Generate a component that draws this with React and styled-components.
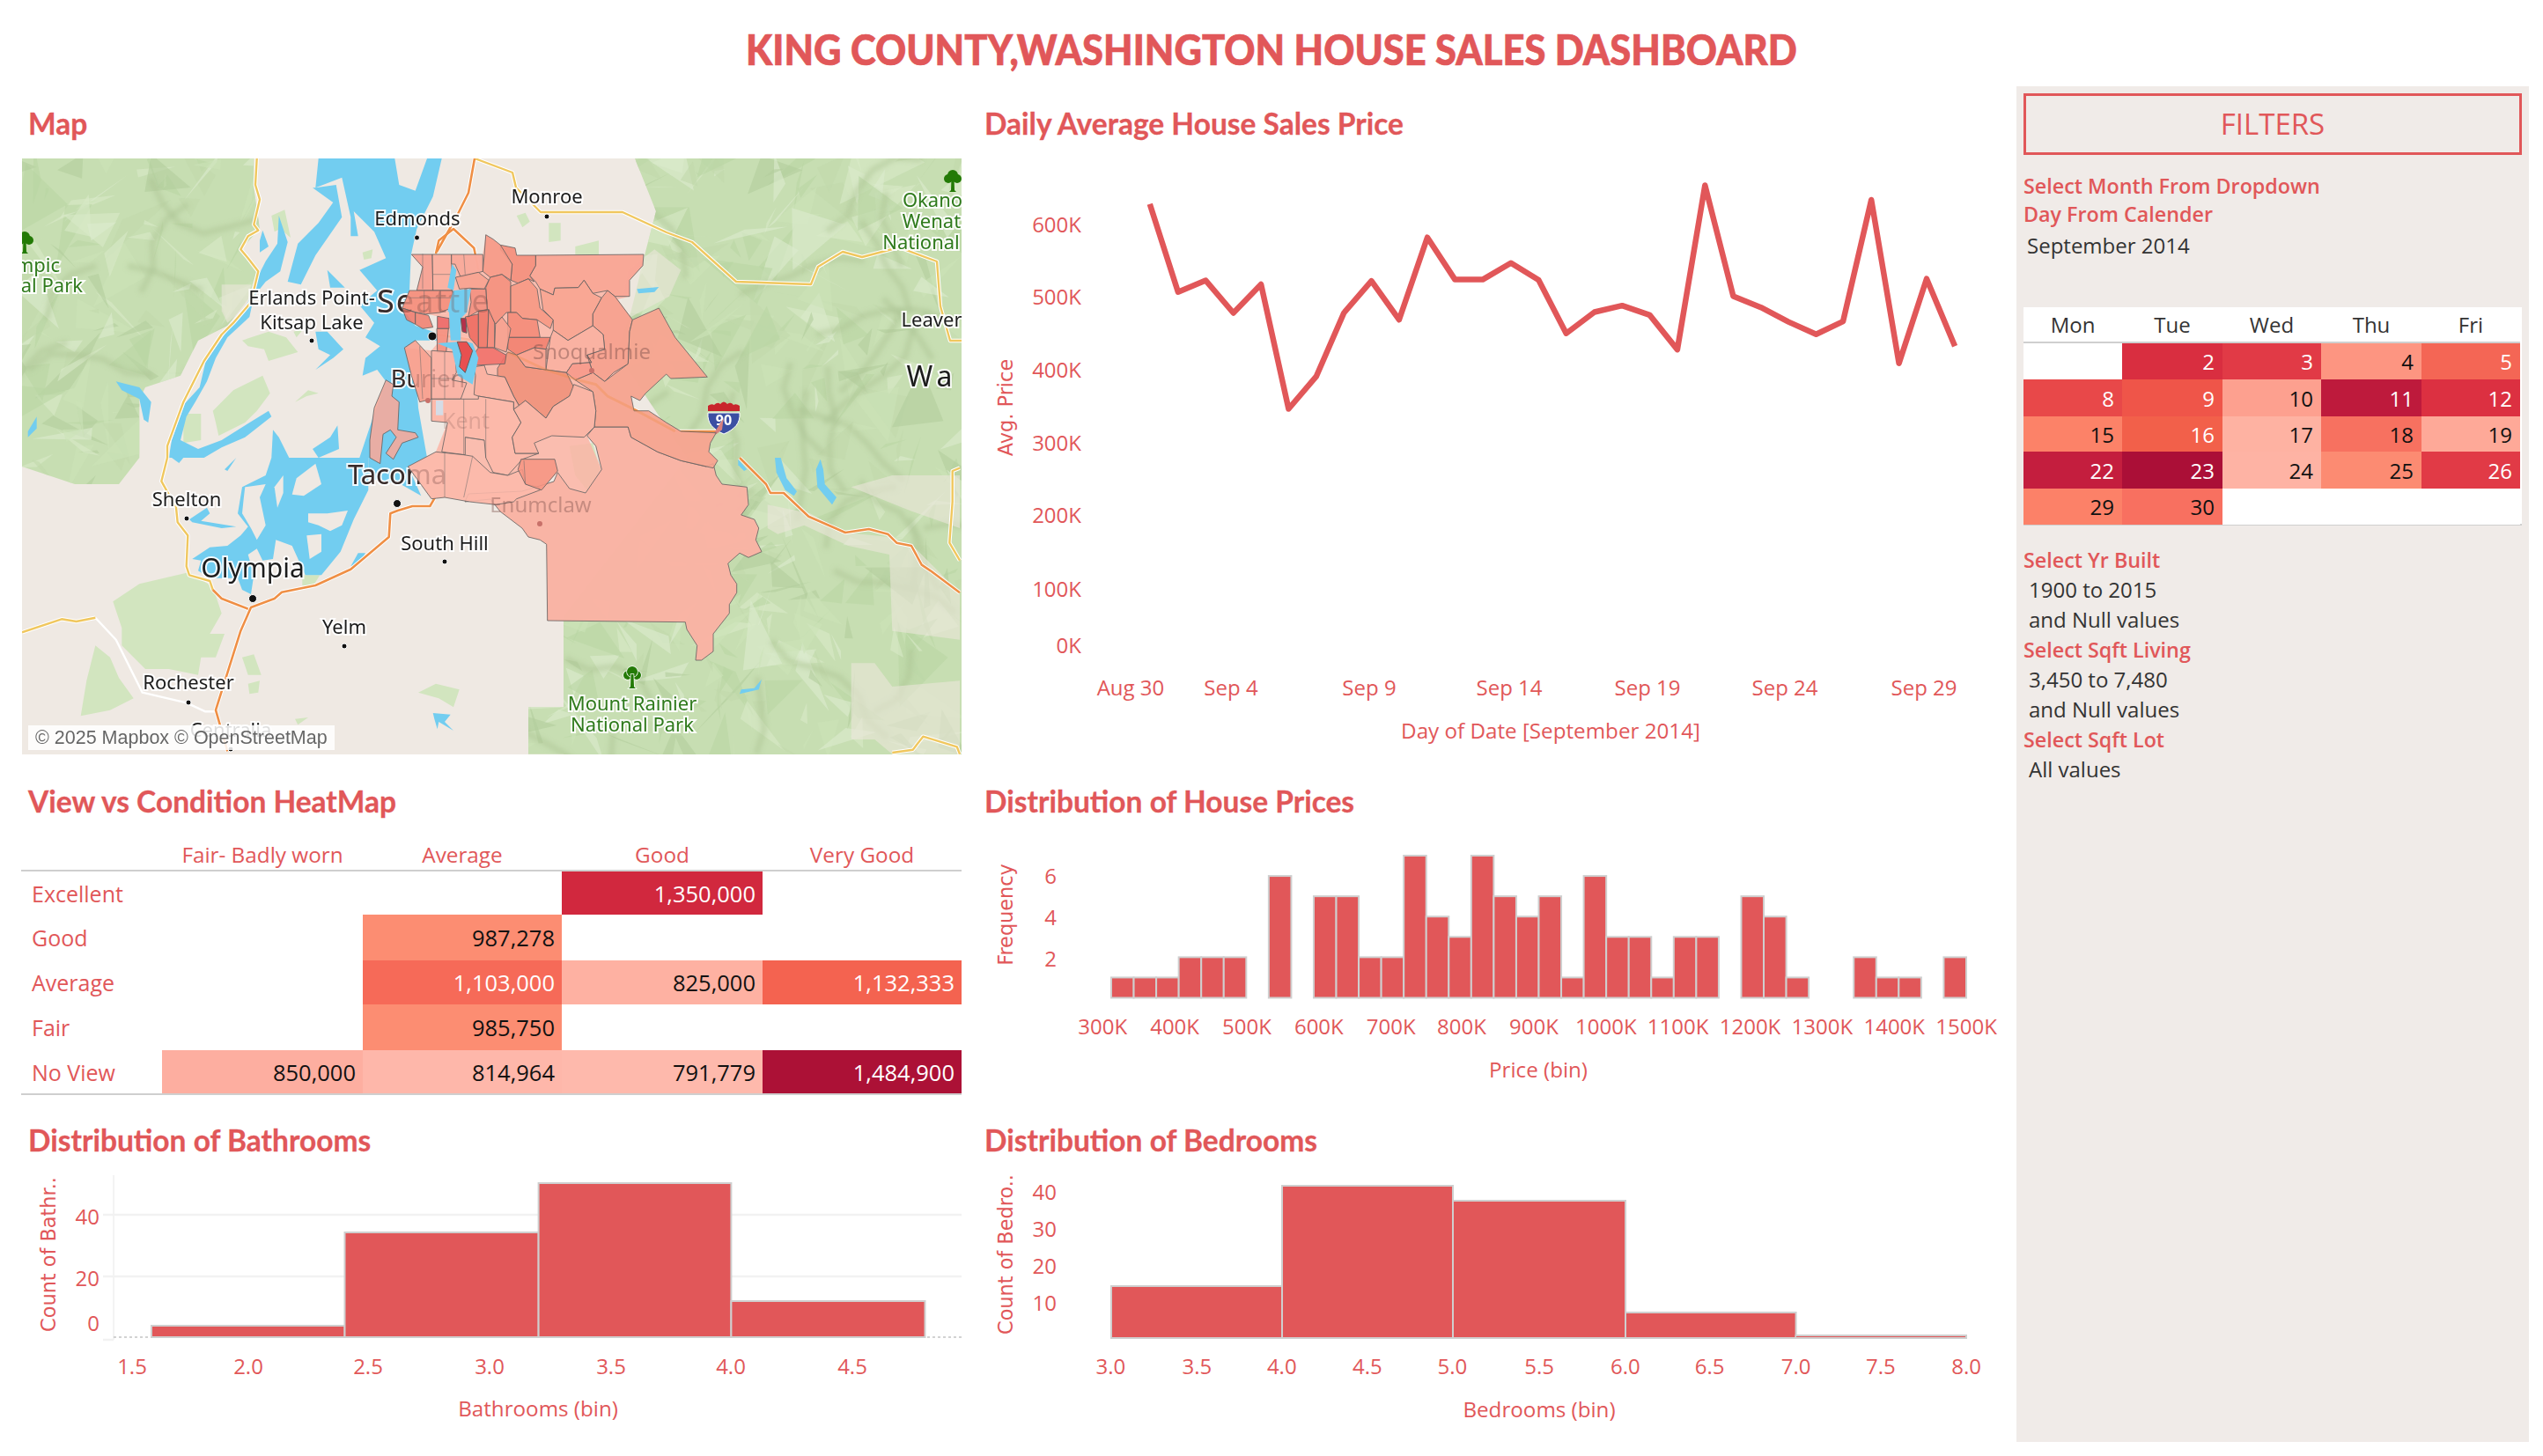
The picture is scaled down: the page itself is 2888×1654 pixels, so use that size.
import React from "react";
import styled, { createGlobalStyle } from "styled-components";

const RED = "#e15759";

const GlobalStyle = createGlobalStyle`
  html, body { margin: 0; padding: 0; background: #fff; }
  body { font-family: "Open Sans", sans-serif; }
`;

const Page = styled.div`
  width: 2888px;
  height: 1654px;
  overflow: hidden;
  background: #fff;
`;
const Title = styled.h1`
  margin: 0;
  height: 98px;
  padding-top: 30px;
  box-sizing: border-box;
  text-align: center;
  font: 900 47px/52px Lato, sans-serif;
  color: ${RED};
  -webkit-text-stroke: 0.7px ${RED};
  transform: scaleX(0.925);
`;
const Body = styled.div`
  display: flex;
`;
const Dash = styled.div`
  width: 2290px;
  display: grid;
  grid-template-columns: 1092px 1198px;
  grid-template-rows: 782px 385px 373px;
`;
const Section = styled.section`
  padding-top: ${(p) => (p.$first ? 12 : 0)}px;
  box-sizing: border-box;
  min-width: 0;
`;
const SectionTitle = styled.h2`
  margin: 0;
  height: 60px;
  padding-left: ${(p) => p.$pad || 32}px;
  font: 700 33.5px/60px Lato, sans-serif;
  color: ${RED};
  -webkit-text-stroke: 0.3px ${RED};
`;
const MapFrame = styled.div`
  position: relative;
  width: 1067px;
  height: 677px;
  margin: 10px 0 0 25px;
  overflow: hidden;
  box-shadow: inset 0 0 0 1px #ddd;
`;
const MapSvg = styled.svg`
  display: block;
`;
const Attribution = styled.div`
  position: absolute;
  left: 7px;
  bottom: 5px;
  padding: 0 8px;
  height: 28px;
  background: rgba(255, 255, 255, 0.85);
  color: #666;
  font: 21.5px/28px "Liberation Sans", sans-serif;
  white-space: nowrap;
`;
const MapLabel = styled.text`
  font-family: "Noto Sans", sans-serif;
  font-size: ${(p) => p.$size || 22}px;
  letter-spacing: ${(p) => p.$track || 0}px;
  fill: ${(p) => p.$color || "#1c1c1c"};
  stroke: rgba(255, 255, 255, 0.9);
  stroke-width: 4px;
  paint-order: stroke;
  text-anchor: ${(p) => p.$anchor || "middle"};
  dominant-baseline: central;
`;
const GhostLabel = styled.text`
  font-family: "Noto Sans", sans-serif;
  font-size: ${(p) => p.$size || 22}px;
  letter-spacing: ${(p) => p.$track || 0}px;
  fill: #7a4f4a;
  opacity: ${(p) => p.$fade || 0.4};
  text-anchor: middle;
  dominant-baseline: central;
`;
const ChartSvg = styled.svg`
  display: block;
`;
const Tick = styled.text`
  font: 400 24px "Open Sans", sans-serif;
  fill: ${RED};
  text-anchor: ${(p) => p.$anchor || "middle"};
  dominant-baseline: central;
`;
const AxisTitle = styled.text`
  font: 500 24.2px "Open Sans", sans-serif;
  fill: ${RED};
  text-anchor: middle;
  dominant-baseline: central;
`;
const SideTitle = styled.text`
  font: 400 22.4px "DejaVu Sans", sans-serif;
  fill: ${RED};
  text-anchor: middle;
  dominant-baseline: central;
`;
const Bar = styled.rect`
  fill: ${RED};
  stroke: #cfcfcf;
  stroke-width: 2px;
`;
const Heat = styled.div`
  margin-left: 24px;
  width: 1068px;
  display: grid;
  grid-template-columns: 160px 228px 226px 228px 226px;
  grid-template-rows: 50px 49px 52px 50px 52px 49px;
  border-bottom: 2px solid #cfcfcf;
  font-size: 25.5px;
`;
const HeatHead = styled.div`
  padding-top: 17px;
  height: 50px;
  box-sizing: border-box;
  text-align: center;
  font-size: 24.3px;
  line-height: 28px;
  font-weight: 500;
  color: ${RED};
  border-bottom: 2px solid #cfcfcf;
`;
const HeatLabel = styled.div`
  display: flex;
  align-items: center;
  padding-left: 12px;
  font-size: 25px;
  font-weight: 500;
  color: ${RED};
`;
const HeatCell = styled.div`
  display: flex;
  align-items: center;
  justify-content: flex-end;
  padding-right: 8px;
  background: ${(p) => p.$bg || "transparent"};
  color: ${(p) => (p.$light ? "#fff" : "#111")};
`;
const Sidebar = styled.aside`
  width: 582px;
  height: 1540px;
  box-sizing: border-box;
  padding: 8px 8px 0;
  background: #f0ebe8;
`;
const FilterBox = styled.div`
  height: 70px;
  box-sizing: border-box;
  border: 3px solid ${RED};
  text-align: center;
  font: 500 33px/64px "Open Sans", sans-serif;
  color: ${RED};
`;
const FilterLabel = styled.div`
  font-weight: 600;
  font-size: 23.3px;
  line-height: ${(p) => p.$line || 34}px;
  color: ${RED};
`;
const FilterValue = styled.div`
  padding-left: ${(p) => p.$pad || 6}px;
  padding-top: ${(p) => p.$top || 0}px;
  font-size: 24px;
  line-height: 34px;
  color: #333;
`;
const FilterTop = styled.div`
  padding-top: 19px;
`;
const Calendar = styled.div`
  margin-top: 53px;
  height: 248px;
  box-sizing: border-box;
  background: #fff;
  display: grid;
  grid-template-columns: 112px 114px 112px 114px 112px;
  grid-template-rows: 41px 41px 42px 40px 42px 41px;
  border-bottom: 2px solid #cfcfcf;
  font-size: 24px;
`;
const CalHead = styled.div`
  text-align: center;
  line-height: 40px;
  font-weight: 500;
  color: #333;
  border-bottom: 2px solid #cfcfcf;
`;
const CalCell = styled.div`
  display: flex;
  align-items: center;
  justify-content: flex-end;
  padding-right: 9px;
  background: ${(p) => p.$bg || "#fff"};
  color: ${(p) => (p.$light ? "#fff" : "#111")};
`;
const FilterBottom = styled.div`
  padding-top: 22px;
`;

// map geometry is traced from crops of the picture, each with its own origin and 3x scale
const ORIGIN = { A: [25, 180], B: [25, 520], C: [380, 240], D: [600, 520] };
const trace = (o, s) =>
  s.trim().split(/\s+/).map((p) => {
    const [x, y] = p.split(",").map(Number);
    return `${(ORIGIN[o][0] + x / 3).toFixed(1)},${(ORIGIN[o][1] + y / 3).toFixed(1)}`;
  }).join(" ");

const GREEN_AREAS = [
  trace("A", "0,0 790,0 790,100 810,240 745,310 800,385 770,480 700,570 600,620 540,740 420,780 400,820 400,1020 0,1020"),
  trace("B", "0,0 400,0 330,90 180,90 0,30"),
  "721,180 1092,180 1092,857 640,857 640,700 780,520 700,400 715,360 720,340 732,290 745,240",
  trace("D", "0,850 120,850 120,1010 0,1010"),
];
const PALE_GREEN = [
  trace("A", "650,860 720,790 820,740 845,800 800,860 760,900 670,945 660,900"),
  trace("A", "550,870 610,870 610,960 550,970"),
  trace("A", "750,620 840,590 900,610 940,660 840,690 825,650 770,640"),
  trace("A", "850,195 895,175 915,270 880,240 860,250"),
  trace("A", "1160,320 1195,310 1190,340 1165,345"),
  trace("A", "925,590 960,580 935,610"),
  trace("A", "930,830 975,790 1010,800 970,810"),
  trace("B", "310,490 400,430 570,390 650,440 680,530 640,600 690,600 660,680 610,680 600,740 500,720 420,720 340,640 340,580"),
  trace("B", "250,640 300,680 330,750 380,820 300,860 200,880 220,760"),
  trace("B", "750,680 790,670 815,740 770,740"),
  trace("B", "770,770 810,760 805,800 775,805"),
  trace("B", "1350,800 1410,770 1490,790 1470,850 1420,820"),
  trace("B", "930,890 975,885 940,910"),
  trace("B", "955,400 1015,400 990,440 955,435"),
  trace("C", "620,15 650,5 665,35 640,55"),
  trace("C", "730,40 770,40 770,100 730,105"),
  trace("C", "820,120 900,100 900,150 820,150"),
  trace("C", "800,800 880,790 905,880 860,950 820,900"),
];
const TAN_AREAS = [
  trace("D", "815,160 960,190 1080,255 1230,270 1310,300 1470,460 1470,620 1240,590 1230,330 1090,300 940,230 850,260 815,240"),
  trace("D", "1100,700 1180,700 1240,780 1470,760 1470,1010 1240,1010 1180,960 1100,960"),
  trace("D", "1240,60 1470,60 1470,240 1300,180 1100,100"),
  trace("A", "680,430 780,430 770,500 700,560 680,520"),
  trace("C", "1000,200 1090,130 1180,200 1140,290 1010,360 975,320"),
];
const WATER = [
  trace("A", "1010,0 1270,0 1285,90 1340,110 1380,0 1430,0 1400,130 1345,240 1325,330 1320,450 1295,510 1340,570 1400,590 1420,620 1340,620 1305,650 1320,700 1345,770 1350,850 1380,1020 1150,1020 1200,870 1240,760 1210,720 1160,740 1170,680 1220,640 1170,610 1200,560 1150,500 1210,450 1150,380 1240,340 1200,250 1130,180 1145,265 1120,265 1120,200 1090,65 1000,100"),
  trace("A", "1000,100 1070,90 1090,200 1000,330 950,430 905,420 940,290 1010,220 1060,150 990,100"),
  trace("A", "875,195 905,285 880,385 830,420 790,470 775,540 700,610 660,680 630,760 590,830 560,880 540,960 600,990 680,960 760,910 840,860 850,880 760,950 680,985 620,1020 500,1020 510,960 555,835 605,780 625,695 690,600 730,550 770,490 810,390 830,350 870,290"),
  trace("A", "820,245 840,300 810,320 810,280"),
  trace("A", "1000,720 1060,680 1095,650 1040,590 1000,590 1010,650 1050,670"),
  trace("A", "1040,380 1100,440 1050,440"),
  trace("A", "855,925 875,950 910,1020 850,1020"),
  trace("A", "1075,910 1080,990 1010,1020 990,990 1050,950"),
  trace("B", "690,40 730,0 700,45"),
  trace("B", "510,0 550,0 535,18"),
  trace("B", "850,0 1180,0 1180,110 1130,210 1085,320 1020,400 965,400 920,300 865,280 855,345 820,350 800,310 770,330 790,400 780,465 750,450 735,410 690,410 640,410 600,385 610,350 580,345 640,305 700,300 745,265 770,235 735,190 740,160 750,100 830,60"),
  trace("B", "570,210 630,170 640,190 610,215 730,235 680,240 580,220"),
  trace("B", "1120,370 1145,325 1170,325 1150,360"),
  trace("B", "1180,0 1390,0 1320,40 1360,130 1290,90 1180,70"),
  trace("B", "1400,870 1460,875 1440,900 1470,930 1420,900 1415,925 1405,890"),
  trace("C", "1030,265 1105,258 1090,275 1035,280"),
  trace("D", "840,0 860,0 880,70 915,115 905,130 875,110 845,50"),
  trace("D", "995,5 1005,40 1010,90 1050,135 1035,160 985,100 980,40"),
  trace("D", "795,755 785,790 720,805 725,790 770,785"),
  trace("D", "715,5 745,40 735,45 715,25"),
  trace("A", "320,760 400,780 440,830 430,900 415,890 400,820 340,790"),
  trace("A", "50,880 50,920 20,950 20,930"),
];
const ISLANDS = [
  trace("B", "760,100 830,90 810,135 830,230 800,280 780,240 750,190 755,140"),
  trace("B", "975,190 1040,190 1110,180 1090,230 1050,250 1010,230 975,220"),
  trace("B", "970,265 1020,260 1020,320 980,345"),
  trace("B", "935,70 1000,20 1020,90 960,130 920,125"),
  trace("B", "860,100 890,60 890,120 870,170"),
];
const LAKES = [
  trace("C", "385,260 400,180 415,200 405,270"),
  trace("C", "405,270 465,265 450,345 430,365 430,440 395,440 390,345 385,340 395,300"),
  trace("C", "350,450 420,445 432,490 425,530 445,550 470,475 450,445 470,450 490,500 470,590 420,560 400,470"),
];
const ORANGE_ROADS = [
  trace("B", "1410,130 1390,165 1330,165 1280,180 1255,190 1250,270 1120,380 1000,435 885,458 860,480 780,510 745,590 660,860 700,1000"),
  trace("B", "770,515 680,480 650,450"),
  trace("C", "590,480 720,540 830,575 890,590 930,630 1030,680 1160,750 1300,750"),
  trace("D", "720,0 810,90 825,120 870,120 955,200 1080,255 1160,243 1225,260 1255,290 1305,300 1340,365 1370,385 1470,460"),
  trace("C", "345,145 355,100 405,60 475,125 490,200"),
  "539,180 532,219 518,247 496,286",
  trace("C", "345,420 480,440"),
];
const YELLOW_ROADS = [
  trace("B", "650,450 640,420 570,400 560,370 565,265 530,220 525,170 475,80 495,0"),
  trace("A", "495,1020 495,980 550,830 620,690 680,600 720,560 780,490 805,385 770,340 745,310 770,265 805,245 790,225 810,140 795,90 800,0"),
  trace("B", "0,595 135,550 185,558 250,545"),
  trace("D", "1240,1005 1310,995 1345,950 1460,985 1470,1010"),
  trace("D", "1470,35 1445,45 1445,150 1435,290 1470,350"),
  "539,180 582,196 586,213 614,241 707,241 757,264 786,275 836,320 921,323 929,303 957,286 979,292 1021,281 1064,297 1068,348 1079,387 1092,387",
];
const WHITE_ROAD = trace("B", "250,545 320,620 410,800 560,835 625,865 660,865");

const SOUTHEAST = trace("C", "885,735 1000,735 1010,770 1100,820 1180,850 1265,870 1290,860") + " " + trace("D", "630,20 640,60 660,90 745,100 750,160 725,195 770,210 785,240 775,280 795,320 750,340 720,325 680,360 690,400 710,430 710,460 685,500 685,530 630,600 630,660 590,690 570,690 575,640 540,585 535,560 65,555 62,295 40,280 0,270") + " 593,600 568,581 557,567 528,570 532,561 593,558 629,547 " + trace("C", "760,890 800,945 855,960 910,880 890,800 860,765");
const COUNTY_OUTLINE = trace("C", "262,147 505,147 515,80 565,115 615,125 620,150 1053,147 1050,185 1005,235 1005,290 965,300 1015,370 1105,330 1160,430 1270,565 1145,570 1130,555 1060,620 1040,645 1010,630 1020,680 1070,680 1130,720 1180,750 1300,755 1280,790 1275,820 1305,850 1290,875 1180,850 1100,820 1010,770 1000,735 885,735 860,765 910,880 855,960 800,945 760,890 700,950 620,980 550,1000 375,975 330,980 250,870 345,820 385,720 330,715 330,640 290,650 262,560 238,465 330,475 350,450 350,358 230,330 255,270 280,270 300,190");

const ZIPS = [
  ["#f9b3a4", SOUTHEAST],
  ["#f9a594", trace("C", "685,150 1053,147 1050,185 1005,235 1005,290 955,290 930,270 880,280 850,235 830,260 750,262 745,285 700,265 685,240 665,220 685,185")],
  ["#f58e7c", trace("C", "565,115 615,125 620,150 685,150 685,185 665,220 680,240 660,230 625,245 600,235 605,180 565,130")],
  ["#f79a88", trace("C", "515,80 540,95 565,115 605,180 600,235 570,215 530,225 505,205 510,150")],
  ["#f58f7d", trace("C", "530,225 570,215 600,240 600,345 585,345 548,385 520,335 515,260")],
  ["#f79783", trace("C", "625,245 660,230 690,265 700,330 745,370 735,400 690,370 640,365 620,345 600,345 600,255")],
  ["#f9a491", trace("C", "700,265 745,285 750,262 830,260 850,235 880,280 910,295 880,350 880,390 795,440 745,405 745,370 710,335")],
  ["#f79f8d", trace("C", "910,295 930,270 955,290 1015,370 1005,410 1000,520 950,550 920,580 880,550 860,490 920,470 915,420 880,390 880,350")],
  ["#fbb0a0", trace("C", "880,390 915,420 920,470 860,490 875,515 810,520 790,550 720,540 735,430 745,405 795,440")],
  ["#f6a48f", trace("C", "1015,370 1105,330 1160,430 1270,565 1145,570 1130,555 1060,620 1040,645 1010,630 1020,680 1070,680 1130,720 1180,750 1300,755 1280,790 1275,820 1305,850 1290,875 1180,850 1100,820 1010,770 1000,735 885,735 890,680 880,615 820,575 880,550 920,580 1000,520 1005,410")],
  ["#f0917a", trace("C", "555,535 590,480 620,490 650,530 720,540 790,550 815,600 800,630 745,665 720,705 650,645 630,665 610,630 580,565 555,565")],
  ["#f58a78", trace("C", "590,345 620,345 640,365 690,370 700,430 590,430")],
  ["#f37f6e", trace("C", "590,430 735,430 720,470 680,465 620,490 590,470")],
  ["#f9a08e", trace("C", "620,490 680,465 720,470 720,540 650,530")],
  ["#f8998a", trace("C", "810,520 875,515 860,490 880,550 820,575 790,550")],
  ["#ef6a60", trace("C", "445,360 490,350 490,465 460,430")],
  ["#ef7668", trace("C", "490,340 525,335 520,465 490,465")],
  ["#f58a7a", trace("C", "525,335 545,380 545,465 520,465")],
  ["#f7a08f", trace("C", "548,385 570,360 600,400 585,480 545,465")],
  ["#f1706a", trace("C", "490,465 540,465 585,490 580,520 480,525 480,480")],
  ["#f7a294", trace("C", "262,147 333,147 335,270 280,270 300,190")],
  ["#fab0a0", trace("C", "333,147 398,147 400,270 335,270")],
  ["#f9a99a", trace("C", "398,147 505,147 505,205 430,225 410,180 398,180")],
  ["#f8a28f", trace("C", "412,225 490,208 525,235 510,265 460,262 425,265")],
  ["#f58e7c", trace("C", "255,270 400,270 420,320 360,345 310,350 280,345 230,330")],
  ["#f48f7f", trace("C", "460,265 515,265 520,335 490,340 455,360 465,310")],
  ["#ef7a6c", trace("C", "230,330 275,345 275,385 245,370")],
  ["#f08070", trace("C", "275,345 320,355 335,395 300,400 275,385")],
  ["#ee6868", trace("C", "350,358 390,365 390,400 350,400")],
  ["#f5907f", trace("C", "348,400 388,400 380,480 350,480")],
  ["#f8a090", trace("C", "238,465 275,440 330,500 330,640 290,650 262,560")],
  ["#fbb3a5", trace("C", "330,475 410,480 415,550 400,575 450,585 430,640 400,640 330,640")],
  ["#f8a898", trace("C", "175,575 200,590 195,630 220,650 215,745 275,755 285,770 230,790 200,845 175,825 210,770 190,745 165,760 155,860 120,840 120,780 135,670")],
  ["#fbb0a0", trace("C", "475,530 510,525 520,555 580,565 610,630 630,665 610,675 610,650 490,630 475,625 480,560")],
  ["#fdb8aa", trace("C", "430,640 490,640 490,630 610,650 610,675 635,720 605,770 615,825 695,825 640,845 590,900 540,890 515,840 510,780 445,770 445,830 365,820 385,720 330,715 330,640")],
  ["#fbb4a4", trace("C", "610,675 650,645 720,705 745,665 800,630 815,590 880,615 890,680 885,735 850,770 740,765 680,790 695,825 615,825 605,770 635,720")],
  ["#fdb9ab", trace("C", "345,820 440,830 470,835 530,890 590,900 640,880 650,930 695,940 700,950 620,980 610,990 550,1000 460,990 375,975 330,980 250,870")],
  ["#f79583", trace("C", "635,845 750,845 760,885 705,950 650,930 625,880")],
];
// these two islands sit in the lake, so they are painted after it
const LAKE_ZIPS = [
  ["#e85050", trace("C", "418,445 450,445 470,475 445,550 425,530 432,490")],
  ["#b5304a", trace("C", "430,365 447,365 450,415 435,410")],
];
const ZIP_LINES = [
  "300,145 300,265", "335,215 400,215", "440,147 445,215", "305,270 305,345", "360,270 360,345",
  "255,295 420,295", "375,480 375,640", "330,570 410,570", "290,460 300,640", "440,640 440,830",
  "445,770 510,780", "375,820 375,975", "470,835 440,975", "650,930 645,850", "515,640 515,840",
];
const CITY_DOTS = [
  [621, 246, 3], [473.5, 270, 3], [354, 387, 3], [491, 382, 5], [451, 572, 4.5], [212, 589, 3],
  [505, 638, 3], [287, 680, 4.5], [391, 734, 3], [214, 798, 3], [262, 851, 3],
];
const LABELS_UNDER = [
  ["Monroe", 621, 222], ["Edmonds", 474, 247], ["Erlands Point-", 354, 337], ["Kitsap Lake", 354, 365],
  ["Seattle", 493, 341, 36, 2], ["Burien", 486, 429, 27], ["Tacoma", 451, 538, 31],
  ["Shelton", 212, 566], ["Olympia", 287, 644, 30],
  ["South Hill", 505, 616], ["Yelm", 391, 711], ["Rochester", 214, 774], ["Centralia", 262, 828],
  ["Leaver", 1058, 362], ["Wa", 1058, 426, 32, 5],
];
const GHOST_LABELS = [
  ["Seattle", 493, 341, 36, 2, 0.3], ["Burien", 486, 429, 27, 0, 0.3], ["Kent", 529, 477, 25, 0, 0.22],
  ["Snoqualmie", 672, 398, 24, 0, 0.45], ["Tacoma", 451, 538, 31, 0, 0.3], ["Enumclaw", 614, 572, 24, 0, 0.4],
];
const PARK_LABELS = [
  ["Okano", 1059, 226], ["Wenat", 1058, 250], ["National", 1046, 274],
  ["Mount Rainier", 718, 798], ["National Park", 718, 822],
];

// small seeded generator, the mountain facets have to stay the same on every load
function makeRandom(seed) {
  let s = seed;
  return () => {
    s = (s * 16807) % 2147483647;
    return s / 2147483647;
  };
}

function buildFacets() {
  const r = makeRandom(4242);
  const shades = ["#d8eac8", "#b9d6a3", "#cbe2b7", "#c2d8ab", "#dcebcf", "#b2cd9c"];
  const out = [];
  for (let i = 0; i < 900; i++) {
    const x = 25 + r() * 1067;
    const y = 180 + r() * 677;
    const size = 18 + r() * 34;
    const p = [0, 1, 2].map(() => `${(x + (r() - 0.5) * size * 2).toFixed(1)},${(y + (r() - 0.5) * size * 2).toFixed(1)}`).join(" ");
    out.push({ p, fill: shades[Math.floor(r() * shades.length)] });
  }
  return out;
}

function buildRidges() {
  const r = makeRandom(991);
  const out = [];
  for (let i = 0; i < 60; i++) {
    let x = 25 + r() * 1067;
    let y = 180 + r() * 677;
    let a = r() * Math.PI * 2;
    const line = [`${x.toFixed(0)},${y.toFixed(0)}`];
    const steps = 3 + Math.floor(r() * 4);
    for (let k = 0; k < steps; k++) {
      a += (r() - 0.5) * 1.3;
      x += Math.cos(a) * 30;
      y += Math.sin(a) * 30;
      line.push(`${x.toFixed(0)},${y.toFixed(0)}`);
    }
    out.push(line.join(" "));
  }
  return out;
}

function Tree({ x, y, halo }) {
  return (
    <g transform={`translate(${x} ${y})`} fill="#237a06" stroke={halo ? "#fff" : "none"} strokeWidth={halo ? 1.5 : 0} paintOrder="stroke">
      <circle cx="-5" cy="-3" r="5" />
      <circle cx="5" cy="-3" r="5" />
      <circle cx="0" cy="-7" r="6" />
      <path d="M-1.5 -4 L1.5 -4 L2 10 L4 12 L-4 12 L-2 10 Z" />
    </g>
  );
}

function Shield() {
  return (
    <g transform="translate(803 455)">
      <path d="M1 6 Q5 3 8 5 Q12 1 15 4 Q19 -1 23 4 Q27 1 30 5 Q33 3 37 6 L37 12 L1 12 Z" fill="#c9252c" />
      <path d="M1 14 L37 14 C38 26 31 33 19 38 C7 33 0 26 1 14 Z" fill="#3b4fa3" stroke="#fff" strokeWidth="1" />
      <text x="19" y="28" textAnchor="middle" fontFamily="Noto Sans" fontWeight="700" fontSize="16" fill="#fff">90</text>
    </g>
  );
}

function KingCountyMap() {
  const facets = buildFacets();
  const ridges = buildRidges();
  return (
    <MapFrame>
      <MapSvg width="1067" height="677" viewBox="25 180 1067 677">
        <defs>
          <clipPath id="mountains">
            {GREEN_AREAS.map((p, i) => <polygon key={i} points={p} />)}
          </clipPath>
          <filter id="soft"><feGaussianBlur stdDeviation="2.5" /></filter>
        </defs>
        <rect x="25" y="180" width="1067" height="677" fill="#efe9e3" />
        <g clipPath="url(#mountains)">
          <rect x="25" y="180" width="1067" height="677" fill="#c7deb2" />
          {facets.map((f, i) => <polygon key={i} points={f.p} fill={f.fill} opacity="0.6" />)}
          <g filter="url(#soft)">
            {ridges.map((l, i) => <polyline key={i} points={l} fill="none" stroke="#a9c291" strokeWidth="7" strokeLinejoin="round" opacity="0.42" />)}
          </g>
        </g>
        {TAN_AREAS.map((p, i) => <polygon key={i} points={p} fill="#ebe6da" opacity="0.6" />)}
        {PALE_GREEN.map((p, i) => <polygon key={i} points={p} fill="#d2e5bf" />)}
        {WATER.map((p, i) => <polygon key={i} points={p} fill="#72cdf0" />)}
        {ISLANDS.map((p, i) => <polygon key={i} points={p} fill="#efe9e3" />)}
        {[...ORANGE_ROADS, ...YELLOW_ROADS].map((p, i) => <polyline key={i} points={p} fill="none" stroke="#fff" strokeWidth="4.5" strokeLinejoin="round" />)}
        <polyline points={WHITE_ROAD} fill="none" stroke="#fff" strokeWidth="2.4" strokeLinejoin="round" />
        {YELLOW_ROADS.map((p, i) => <polyline key={i} points={p} fill="none" stroke="#f0c75e" strokeWidth="2.4" strokeLinejoin="round" />)}
        {ORANGE_ROADS.map((p, i) => <polyline key={i} points={p} fill="none" stroke="#ef8f45" strokeWidth="2.6" strokeLinejoin="round" />)}
        {CITY_DOTS.map(([x, y, r], i) => <circle key={i} cx={x} cy={y} r={r} fill="#111" stroke="#fff" strokeWidth="1" />)}
        {LABELS_UNDER.map(([t, x, y, size, track]) => (
          <MapLabel key={t} x={x} y={y} $size={size} $track={track}>{t}</MapLabel>
        ))}
        {PARK_LABELS.map(([t, x, y]) => (
          <MapLabel key={t + y} x={x} y={y} $color="#2f7a1c">{t}</MapLabel>
        ))}
        <MapLabel x="68" y="300" $color="#2f7a1c" $anchor="end">Olympic</MapLabel>
        <MapLabel x="94" y="323" $color="#2f7a1c" $anchor="end">National Park</MapLabel>
        <Tree x={1082} y={206} />
        <Tree x={28} y={276} />
        <Tree x={718} y={770} halo />
        <Shield />
        <polygon points={COUNTY_OUTLINE} fill="#fbb5a6" opacity="0.85" />
        <polygon points={SOUTHEAST} fill="#fbb5a6" opacity="0.85" />
        <polygon points={trace("C", "1290,760 1325,705 1320,745 1300,760")} fill="#d8807e" />
        <g fillOpacity="0.88" stroke="#5f5f5f" strokeWidth="1" strokeOpacity="0.8" strokeLinejoin="round">
          {ZIPS.map(([fill, p], i) => <polygon key={i} points={p} fill={fill} />)}
        </g>
        <g stroke="#6a6a6a" strokeWidth="0.8" strokeOpacity="0.65">
          {ZIP_LINES.map((l, i) => <polyline key={i} points={trace("C", l)} fill="none" />)}
        </g>
        {LAKES.map((p, i) => <polygon key={i} points={p} fill="#72cdf0" />)}
        <g stroke="#5f5f5f" strokeWidth="1">
          {LAKE_ZIPS.map(([fill, p], i) => <polygon key={i} points={p} fill={fill} />)}
        </g>
        <polygon points={trace("C", "345,645 370,645 370,695 345,695")} fill="#d5dce6" />
        <polyline points={trace("C", "590,480 720,540 830,575 890,590 930,630 1030,680 1160,750")} fill="none" stroke="#ef8f45" strokeWidth="3" opacity="0.3" />
        {GHOST_LABELS.map(([t, x, y, size, track, fade]) => (
          <GhostLabel key={t} x={x} y={y} $size={size} $track={track} $fade={fade}>{t}</GhostLabel>
        ))}
        <circle cx="672" cy="421" r="3" fill="#c9716a" />
        <circle cx="613" cy="595" r="3" fill="#c9716a" />
        <circle cx="486" cy="455" r="3" fill="#c9716a" />
      </MapSvg>
      <Attribution>© 2025 Mapbox © OpenStreetMap</Attribution>
    </MapFrame>
  );
}

const DAILY_POINTS = "269,272 311,478 352,451 393,527 434,460 475,752 516,676 557,527 598,452 639,543 681,350 722,449 763,449 805,410 846,450 887,575 929,525 970,510 1011,532 1052,613 1093,228 1135,488 1176,514 1217,548 1258,577 1298,547 1340,262 1381,645 1422,447 1464,605"
  .split(" ")
  .map((p) => {
    const [x, y] = p.split(",").map(Number);
    return `${(1100 + x / 1.307).toFixed(1)},${(100 + y / 2.063).toFixed(1)}`;
  })
  .join(" ");

function DailyChart() {
  const yTicks = [["600K", 254], ["500K", 336], ["400K", 419], ["300K", 502], ["200K", 584], ["100K", 668], ["0K", 732]];
  const xTicks = [["Aug 30", 1284], ["Sep 4", 1398], ["Sep 9", 1555], ["Sep 14", 1714], ["Sep 19", 1871], ["Sep 24", 2027], ["Sep 29", 2185]];
  return (
    <ChartSvg width="1198" height="710" viewBox="1092 170 1198 710">
      <polyline points={DAILY_POINTS} fill="none" stroke={RED} strokeWidth="6.5" strokeLinejoin="round" />
      {yTicks.map(([t, y]) => <Tick key={t} x="1228" y={y} $anchor="end">{t}</Tick>)}
      {xTicks.map(([t, x]) => <Tick key={t} x={x} y="780">{t}</Tick>)}
      <AxisTitle x="1761" y="829">Day of Date [September 2014]</AxisTitle>
      <SideTitle x="1142" y="463" transform="rotate(-90 1142 463)">Avg. Price</SideTitle>
    </ChartSvg>
  );
}

const PRICE_BINS = [1, 1, 1, 2, 2, 2, 0, 6, 0, 5, 5, 2, 2, 7, 4, 3, 7, 5, 4, 5, 1, 6, 3, 3, 1, 3, 3, 0, 5, 4, 1, 0, 0, 2, 1, 1, 0, 2];

function PriceChart() {
  const base = 1133.5;
  const unit = 23.07;
  const width = (2233 - 1262) / 38;
  const labels = ["300K", "400K", "500K", "600K", "700K", "800K", "900K", "1000K", "1100K", "1200K", "1300K", "1400K", "1500K"];
  const labelX = [199, 306, 413, 520, 627, 732, 839, 946, 1053, 1160, 1267, 1374, 1481];
  return (
    <ChartSvg width="1198" height="325" viewBox="1092 940 1198 325">
      {PRICE_BINS.map((v, i) => v > 0 && (
        <Bar key={i} x={1262 + i * width} y={base - v * unit} width={width} height={v * unit} />
      ))}
      {[["6", 994], ["4", 1041], ["2", 1088]].map(([t, y]) => <Tick key={t} x="1200" y={y} $anchor="end">{t}</Tick>)}
      {labels.map((t, i) => <Tick key={t} x={1100 + labelX[i] / 1.307} y="1165">{t}</Tick>)}
      <AxisTitle x="1747" y="1214">Price (bin)</AxisTitle>
      <SideTitle x="1142" y="1039" transform="rotate(-90 1142 1039)">Frequency</SideTitle>
    </ChartSvg>
  );
}

function BedroomsChart() {
  const bars = [[1262, 1456, 1461], [1456, 1650, 1347], [1650, 1846, 1364], [1846, 2039.6, 1491], [2039.6, 2233, 1517]];
  const labelX = [211, 339, 465, 592, 718, 847, 975, 1100, 1228, 1354, 1481];
  const labels = ["3.0", "3.5", "4.0", "4.5", "5.0", "5.5", "6.0", "6.5", "7.0", "7.5", "8.0"];
  return (
    <ChartSvg width="1198" height="313" viewBox="1092 1325 1198 313">
      {bars.map(([a, b, top]) => <Bar key={a} x={a} y={top} width={b - a} height={1520 - top} />)}
      {[["40", 1353], ["30", 1395], ["20", 1437], ["10", 1479]].map(([t, y]) => <Tick key={t} x="1200" y={y} $anchor="end">{t}</Tick>)}
      {labels.map((t, i) => <Tick key={t} x={1100 + labelX[i] / 1.307} y="1551">{t}</Tick>)}
      <AxisTitle x="1748" y="1600">Bedrooms (bin)</AxisTitle>
      <SideTitle x="1142" y="1425" transform="rotate(-90 1142 1425)">Count of Bedro..</SideTitle>
    </ChartSvg>
  );
}

function BathroomsChart() {
  const bars = [[172, 391.5, 1506], [391.5, 611.6, 1400], [611.6, 830.4, 1344], [830.4, 1050.5, 1478]];
  const ticks = [["1.5", 150], ["2.0", 282], ["2.5", 418], ["3.0", 556], ["3.5", 694], ["4.0", 830], ["4.5", 968]];
  return (
    <ChartSvg width="1092" height="313" viewBox="0 1325 1092 313">
      <line x1="129" y1="1335" x2="129" y2="1522" stroke="#f3f3f3" strokeWidth="2" />
      <line x1="117" y1="1380" x2="1092" y2="1380" stroke="#f2f2f2" strokeWidth="2.5" />
      <line x1="117" y1="1450" x2="1092" y2="1450" stroke="#f2f2f2" strokeWidth="2.5" />
      <line x1="117" y1="1522" x2="129" y2="1522" stroke="#f2f2f2" strokeWidth="2.5" />
      <line x1="129" y1="1519" x2="1092" y2="1519" stroke="#c4c4c4" strokeWidth="1.5" strokeDasharray="3 3" />
      {bars.map(([a, b, top]) => <Bar key={a} x={a} y={top} width={b - a} height={1519 - top} />)}
      {[["40", 1381], ["20", 1451], ["0", 1502]].map(([t, y]) => <Tick key={t} x="113" y={y} $anchor="end">{t}</Tick>)}
      {ticks.map(([t, x]) => <Tick key={t} x={x} y="1551">{t}</Tick>)}
      <AxisTitle x="611" y="1599">Bathrooms (bin)</AxisTitle>
      <SideTitle x="55" y="1425" transform="rotate(-90 55 1425)">Count of Bathr..</SideTitle>
    </ChartSvg>
  );
}

const HEAT_HEAD = ["", "Fair- Badly worn", "Average", "Good", "Very Good"];
const HEAT_ROWS = [
  ["Excellent", null, null, ["1,350,000", "#d1283e", true], null],
  ["Good", null, ["987,278", "#fc8d72"], null, null],
  ["Average", null, ["1,103,000", "#f66a58", true], ["825,000", "#feb1a2"], ["1,132,333", "#f46350", true]],
  ["Fair", null, ["985,750", "#fc8d72"], null, null],
  ["No View", ["850,000", "#fdaea0"], ["814,964", "#feb7aa"], ["791,779", "#feb9ac"], ["1,484,900", "#ac1136", true]],
];

function HeatMap() {
  return (
    <Heat>
      {HEAT_HEAD.map((h, i) => <HeatHead key={i}>{h}</HeatHead>)}
      {HEAT_ROWS.map(([label, ...cells]) => (
        <React.Fragment key={label}>
          <HeatLabel>{label}</HeatLabel>
          {cells.map((c, i) => (
            c ? <HeatCell key={i} $bg={c[1]} $light={c[2]}>{c[0]}</HeatCell> : <HeatCell key={i} />
          ))}
        </React.Fragment>
      ))}
    </Heat>
  );
}

const CAL_DAYS = [
  null, [2, "#d92e40", 1], [3, "#e13a46", 1], [4, "#fd9581"], [5, "#f46655", 1],
  [8, "#e84849", 1], [9, "#ef5549", 1], [10, "#fda08f"], [11, "#be1a3c", 1], [12, "#dc3041", 1],
  [15, "#fc8268"], [16, "#f2604a", 1], [17, "#feb2a2"], [18, "#f77160"], [19, "#fea998"],
  [22, "#c41e3e", 1], [23, "#ab0f37", 1], [24, "#feb3a4"], [25, "#fc8b72"], [26, "#e13a46", 1],
  [29, "#fc8168"], [30, "#f87060"], null, null, null,
];

function Filters() {
  return (
    <Sidebar>
      <FilterBox>FILTERS</FilterBox>
      <FilterTop>
        <FilterLabel $line={32}>Select Month From Dropdown</FilterLabel>
        <FilterLabel $line={32}>Day From Calender</FilterLabel>
        <FilterValue $pad={4} $top={3}>September 2014</FilterValue>
      </FilterTop>
      <Calendar>
        {["Mon", "Tue", "Wed", "Thu", "Fri"].map((d) => <CalHead key={d}>{d}</CalHead>)}
        {CAL_DAYS.map((d, i) => (
          d ? <CalCell key={i} $bg={d[1]} $light={d[2]}>{d[0]}</CalCell> : <CalCell key={i} />
        ))}
      </Calendar>
      <FilterBottom>
        <FilterLabel>Select Yr Built</FilterLabel>
        <FilterValue>1900 to 2015</FilterValue>
        <FilterValue>and Null values</FilterValue>
        <FilterLabel>Select Sqft Living</FilterLabel>
        <FilterValue>3,450 to 7,480</FilterValue>
        <FilterValue>and Null values</FilterValue>
        <FilterLabel>Select Sqft Lot</FilterLabel>
        <FilterValue>All values</FilterValue>
      </FilterBottom>
    </Sidebar>
  );
}

export default function App() {
  return (
    <Page>
      <GlobalStyle />
      <Title>KING COUNTY,WASHINGTON HOUSE SALES DASHBOARD</Title>
      <Body>
        <Dash>
          <Section $first>
            <SectionTitle>Map</SectionTitle>
            <KingCountyMap />
          </Section>
          <Section $first>
            <SectionTitle $pad={26}>Daily Average House Sales Price</SectionTitle>
            <DailyChart />
          </Section>
          <Section>
            <SectionTitle>View vs Condition HeatMap</SectionTitle>
            <HeatMap />
          </Section>
          <Section>
            <SectionTitle $pad={26}>Distribution of House Prices</SectionTitle>
            <PriceChart />
          </Section>
          <Section>
            <SectionTitle>Distribution of Bathrooms</SectionTitle>
            <BathroomsChart />
          </Section>
          <Section>
            <SectionTitle $pad={26}>Distribution of Bedrooms</SectionTitle>
            <BedroomsChart />
          </Section>
        </Dash>
        <Filters />
      </Body>
    </Page>
  );
}
